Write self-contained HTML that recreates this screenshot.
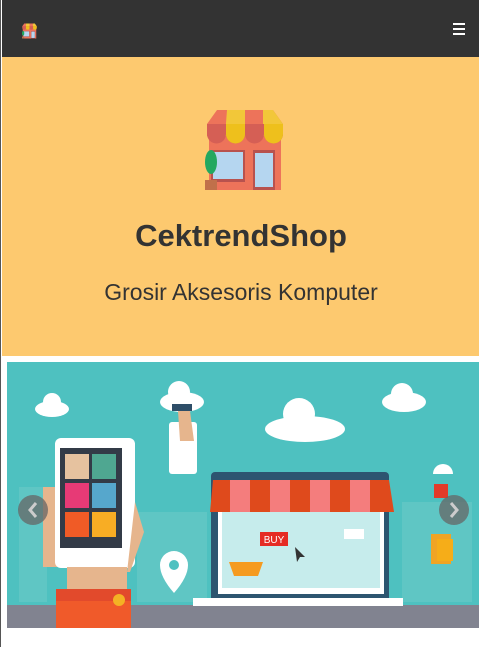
<!DOCTYPE html>
<html><head><meta charset="utf-8"><style>
*{margin:0;padding:0;box-sizing:border-box}
body{width:479px;height:647px;overflow:hidden;background:#fff;font-family:"Liberation Sans",sans-serif;position:relative;border-left:1px solid #555}
.nav{position:absolute;left:1px;top:0;width:478px;height:57px;background:#333}
.hero{position:absolute;left:1px;top:57px;width:478px;height:299px;background:#fdc96f;text-align:center}
h1{position:absolute;top:161px;left:0;width:100%;font-size:31px;line-height:36px;font-weight:bold;color:#333}
.sub{position:absolute;top:221px;left:0;width:100%;font-size:23px;line-height:28px;color:#333}
.ban{position:absolute;left:6px;top:362px;width:473px;height:266px}
</style></head><body>
<div class="nav">
<svg style="position:absolute;left:20px;top:23px" width="15" height="16" viewBox="0 0 80 80"><use href="#shop"/></svg>
<div style="position:absolute;left:451px;top:23px;width:12px;height:12px;border-top:2px solid #fff;border-bottom:2px solid #fff"><div style="margin-top:3px;height:2px;background:#fff"></div></div>
</div>
<div class="hero">
<svg style="position:absolute;left:203px;top:53px" width="80" height="80" viewBox="0 0 80 80">
<defs><g id="shop">
<rect x="4" y="26" width="72" height="54" fill="#ed735a"/>
<path d="M12 0H68L78 14V26H2V14Z" fill="#ed735a"/>
<path d="M22 0H40V26H20Z M58 0H68L78 14V26H58Z" fill="#f2c739"/>
<path d="M2 14h76v10a9 9 0 0 1-19 0a9 9 0 0 1-19 0a9 9 0 0 1-19 0a9 9 0 0 1-19 0z" fill="#d55f55"/>
<path d="M21 14h19v10a9 9 0 0 1-19 0z M59 14h19v10a9 9 0 0 1-19 0z" fill="#eec01c"/>
<rect x="6" y="40" width="34" height="32" fill="#b8524e"/><rect x="8" y="42" width="30" height="27" fill="#b5d6f0"/>
<rect x="48" y="40" width="22" height="40" fill="#b8524e"/><rect x="50" y="43" width="18" height="34" fill="#b5d6f0"/>
<ellipse cx="6" cy="52" rx="6" ry="12" fill="#23a860"/><path d="M0 70h12v10H0z" fill="#c0704a"/>
</g></defs><use href="#shop"/></svg>
<h1>CektrendShop</h1>
<div class="sub">Grosir Aksesoris Komputer</div>
</div>
<svg class="ban" viewBox="0 0 473 266">
<rect width="473" height="266" fill="#4ec1c0"/>
<g fill="#5fc6c4"><rect x="12" y="125" width="28" height="115"/><rect x="130" y="150" width="70" height="90"/><rect x="395" y="140" width="70" height="100"/></g>
<g fill="#fff"><ellipse cx="45" cy="47" rx="17" ry="8"/><circle cx="45" cy="40" r="9"/><ellipse cx="175" cy="40" rx="22" ry="10"/><circle cx="172" cy="30" r="11"/><ellipse cx="298" cy="67" rx="40" ry="13"/><circle cx="292" cy="52" r="16"/><ellipse cx="397" cy="40" rx="22" ry="10"/><circle cx="395" cy="32" r="11"/></g>
<rect x="0" y="243" width="473" height="23" fill="#818390"/>
<rect x="162" y="60" width="28" height="52" rx="3" fill="#fff"/><rect x="165" y="42" width="20" height="7" fill="#2e4e68"/><path d="M171 49h12l4 30h-14z" fill="#e6b58d"/>
<path d="M36 125h18v80h-18z" fill="#e6b58d"/>
<rect x="48" y="76" width="80" height="130" rx="6" fill="#fff"/><rect x="53" y="86" width="62" height="100" fill="#333b47"/>
<rect x="58" y="92" width="24" height="25" fill="#e6c29f"/><rect x="85" y="92" width="24" height="25" fill="#4fa791"/>
<rect x="58" y="121" width="24" height="25" fill="#e73a76"/><rect x="85" y="121" width="24" height="25" fill="#56a7cc"/>
<rect x="58" y="150" width="24" height="25" fill="#f05b26"/><rect x="85" y="150" width="24" height="25" fill="#f8ad24"/>
<path d="M128 140l9 30l-14 40h-60v18h55z" fill="#e6b58d"/><path d="M60 205h60v25h-60z" fill="#e6b58d"/>
<rect x="49" y="227" width="75" height="39" fill="#f05a2a"/><rect x="49" y="227" width="75" height="12" fill="#e24a2c"/><circle cx="112" cy="238" r="6" fill="#f4b224"/>
<path d="M153 203a14 14 0 1 1 28 0q0 12-14 28q-14-16-14-28z" fill="#fff"/><circle cx="167" cy="203" r="5" fill="#4ec1c0"/>
<rect x="204" y="110" width="178" height="130" rx="4" fill="#2d5570"/><rect x="211" y="132" width="166" height="100" fill="#fff"/><rect x="215" y="136" width="158" height="90" fill="#c6ecec"/>
<rect x="186" y="236" width="210" height="8" fill="#fff"/>
<path d="M206 118h176l5 32H203z" fill="#df4a1c"/><g fill="#f47d7d"><rect x="223" y="118" width="20" height="32"/><rect x="263" y="118" width="20" height="32"/><rect x="303" y="118" width="20" height="32"/><rect x="343" y="118" width="20" height="32"/></g>
<rect x="253" y="170" width="28" height="14" fill="#e52b24"/><text x="267" y="181" font-size="10" fill="#fff" text-anchor="middle" font-family="Liberation Sans">BUY</text>
<path d="M222 200h34l-5 14h-24z" fill="#f59b20"/><path d="M288 185l10 10-5 0 -3 5z" fill="#333"/>
<rect x="337" y="167" width="20" height="10" fill="#fff"/>
<path d="M427 122h14v14h-14z" fill="#e23b2a"/><path d="M426 112a10 10 0 0 1 20 0z" fill="#fff"/>
<path d="M424 172h20v30h-20z" fill="#f0a424"/><path d="M430 177h16v22h-16z" fill="#f6ad18"/>
<circle cx="26" cy="148" r="15" fill="#666" opacity=".75"/><path d="M29 141l-6 7 6 7" stroke="#ccc" stroke-width="3" fill="none"/>
<circle cx="447" cy="148" r="15" fill="#666" opacity=".75"/><path d="M444 141l6 7-6 7" stroke="#ccc" stroke-width="3" fill="none"/>
</svg>
</body></html>
